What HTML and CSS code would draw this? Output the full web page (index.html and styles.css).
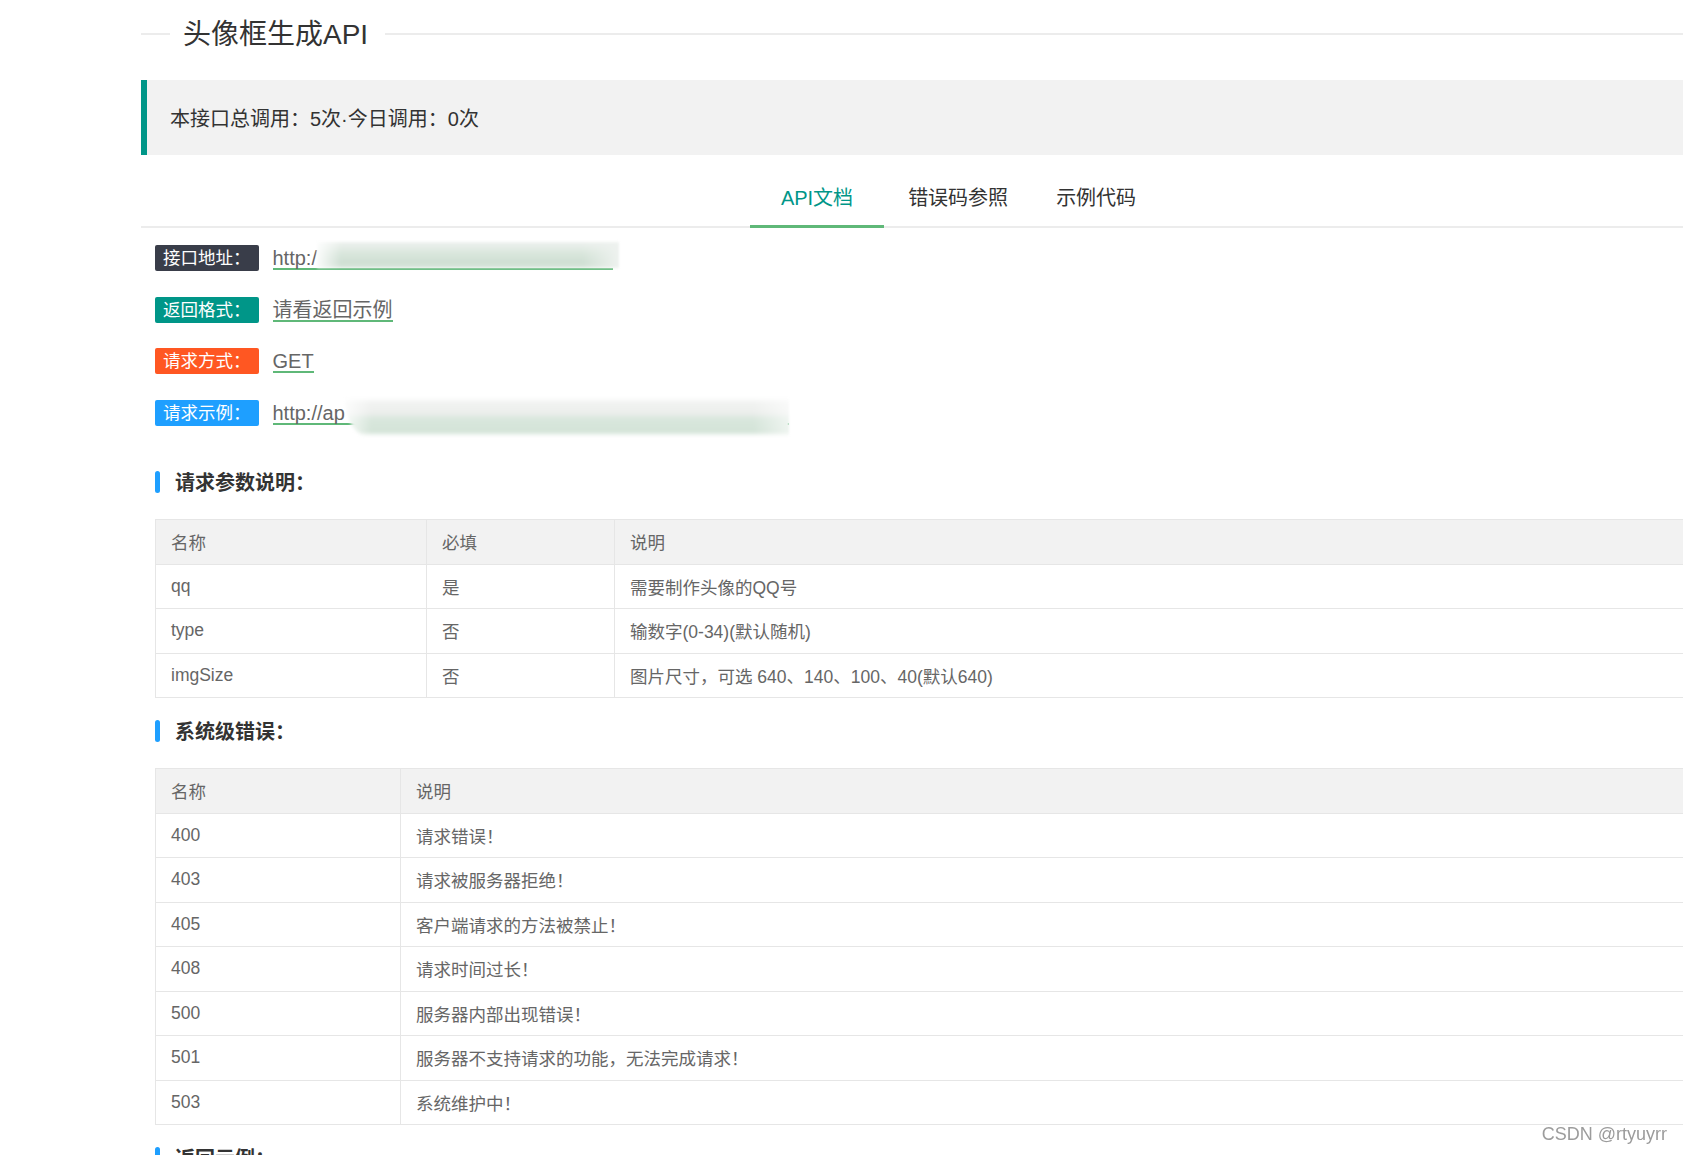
FILE: index.html
```html
<!DOCTYPE html>
<html lang="zh-CN">
<head>
<meta charset="utf-8">
<title>头像框生成API</title>
<link rel="stylesheet" href="styles.css">
</head>
<body>
<div class="page">
  <div class="legend"><span class="legend-text">头像框生成API</span></div>

  <div class="quote">本接口总调用：5次·今日调用：0次</div>

  <ul class="tabs">
    <li class="tab active">API文档</li>
    <li class="tab">错误码参照</li>
    <li class="tab">示例代码</li>
  </ul>

  <div class="body">
    <div class="info">
      <div class="info-row">
        <span class="badge badge-dark">接口地址：</span>
        <span class="value">http:/<span class="mask mask-a"></span></span>
      </div>
      <div class="info-row">
        <span class="badge badge-teal">返回格式：</span>
        <span class="value">请看返回示例</span>
      </div>
      <div class="info-row">
        <span class="badge badge-orange">请求方式：</span>
        <span class="value">GET</span>
      </div>
      <div class="info-row">
        <span class="badge badge-blue">请求示例：</span>
        <span class="value">http://ap<span class="mask mask-b"></span></span>
      </div>
    </div>

    <h3 class="sec-title sec-first">请求参数说明：</h3>
    <table class="tbl tbl-params">
      <colgroup><col class="c1"><col class="c2"><col></colgroup>
      <thead><tr><th>名称</th><th>必填</th><th>说明</th></tr></thead>
      <tbody>
        <tr><td>qq</td><td>是</td><td>需要制作头像的QQ号</td></tr>
        <tr><td>type</td><td>否</td><td>输数字(0-34)(默认随机)</td></tr>
        <tr><td>imgSize</td><td>否</td><td>图片尺寸，可选 640、140、100、40(默认640)</td></tr>
      </tbody>
    </table>

    <h3 class="sec-title sec-second">系统级错误：</h3>
    <table class="tbl tbl-errors">
      <colgroup><col class="c1"><col></colgroup>
      <thead><tr><th>名称</th><th>说明</th></tr></thead>
      <tbody>
        <tr><td>400</td><td>请求错误！</td></tr>
        <tr><td>403</td><td>请求被服务器拒绝！</td></tr>
        <tr><td>405</td><td>客户端请求的方法被禁止！</td></tr>
        <tr><td>408</td><td>请求时间过长！</td></tr>
        <tr><td>500</td><td>服务器内部出现错误！</td></tr>
        <tr><td>501</td><td>服务器不支持请求的功能，无法完成请求！</td></tr>
        <tr><td>503</td><td>系统维护中！</td></tr>
      </tbody>
    </table>

    <h3 class="sec-title">返回示例：</h3>
  </div>
</div>
<div class="watermark">CSDN @rtyuyrr</div>
</body>
</html>
```

FILE: styles.css
```css
html, body {
  margin: 0;
  padding: 0;
  background: #fff;
  overflow: hidden;
}

body {
  font-family: "Liberation Sans", "Noto Sans CJK SC", sans-serif;
  color: #333;
  width: 1683px;
  height: 1155px;
}

.page {
  margin-left: 141px;
  width: 1628px;
}

/* fieldset-like title */
.legend {
  display: flex;
  align-items: center;
  height: 68px;
}
.legend::before,
.legend::after {
  content: "";
  height: 2px;
  background: #ececec;
}
.legend::before {
  width: 29px;
}
.legend::after {
  flex: 1;
}
.legend-text {
  font-size: 28px;
  line-height: 34px;
  padding-top: 2px;
  color: #333;
  margin: 0 17px 0 13px;
}

/* blockquote */
.quote {
  margin-top: 12px;
  height: 75px;
  line-height: 72px;
  padding-top: 3px;
  box-sizing: border-box;
  border-left: 6px solid #009688;
  background: #f2f2f2;
  padding-left: 23px;
  font-size: 20px;
  color: #333;
}

/* tabs */
.tabs {
  list-style: none;
  margin: 13px 0 0;
  padding: 0;
  display: flex;
  justify-content: center;
  border-bottom: 2px solid #ececec;
}
.tab {
  font-size: 20px;
  line-height: 54px;
  padding: 3px 24px 0;
  border-bottom: 3px solid transparent;
  margin-bottom: -2px;
  color: #333;
  white-space: nowrap;
}
.tab.active {
  padding: 3px 31px 0;
  color: #009688;
  border-bottom-color: #5fb878;
}

.body {
  padding-left: 14px;
}

/* info rows */
.info {
  margin-top: 17px;
  display: flex;
  flex-direction: column;
  gap: 25.5px;
}
.info-row {
  display: flex;
  align-items: center;
  height: 26px;
}
.badge {
  display: inline-block;
  height: 26px;
  line-height: 26px;
  padding: 0 8px;
  font-size: 17.5px;
  color: #fff;
  border-radius: 2px;
  white-space: nowrap;
}
.badge-dark { background: #393d49; }
.badge-teal { background: #009688; }
.badge-orange { background: #ff5722; }
.badge-blue { background: #1e9fff; }

.value {
  margin-left: 14px;
  font-size: 20px;
  line-height: 20px;
  color: #666;
  border-bottom: 2px solid #5fb878;
  white-space: nowrap;
  margin-top: 2px;
}

.mask {
  display: inline-block;
  vertical-align: top;
  height: 20px;
  filter: blur(1.2px);
}
.mask-a {
  width: 302px;
  margin-right: -6px;
  transform: translateY(-3px) scaleY(1.3);
  background:
    linear-gradient(90deg, rgba(255,255,255,0.9) 0%, rgba(255,255,255,0) 8%, rgba(255,255,255,0) 88%, rgba(238,242,239,1) 100%),
    linear-gradient(180deg, #eef2ef 0%, #d9e6dc 45%, #cfdfd3 80%, #dbe7de 100%);
}
.mask-b {
  width: 444px;
  transform: translateY(4px) scaleY(1.7);
  background:
    linear-gradient(90deg, rgba(255,255,255,0.8) 0%, rgba(255,255,255,0) 6%, rgba(255,255,255,0) 92%, rgba(255,255,255,0.6) 100%),
    linear-gradient(180deg, #f3f4f3 0%, #eceeec 40%, #d9e7dd 55%, #d3e3d7 100%);
  border-radius: 0 0 0 30px;
}

/* section titles */
.sec-title {
  display: flex;
  align-items: center;
  height: 22px;
  margin: 21.5px 0 0;
  font-size: 20px;
  font-weight: bold;
  color: #333;
}
.sec-title::before {
  content: "";
  width: 5px;
  height: 22px;
  border-radius: 3px;
  background: #1e9fff;
  margin-right: 15px;
}
.sec-first {
  margin-top: 45px;
}
.sec-second {
  margin-top: 21.5px;
}

/* tables */
.tbl {
  margin-top: 26px;
  width: 100%;
  border-collapse: collapse;
  table-layout: fixed;
  border: 1px solid #e6e6e6;
  font-size: 17.5px;
  color: #666;
}
.tbl th,
.tbl td {
  border: 1px solid #e6e6e6;
  padding: 0 15px;
  height: 43.5px;
  text-align: left;
  font-weight: normal;
  white-space: nowrap;
}
.tbl th {
  background: #f2f2f2;
  height: 44px;
}
.tbl-params .c1 { width: 271px; }
.tbl-params .c2 { width: 188px; }
.tbl-errors .c1 { width: 245px; }

/* watermark */
.watermark {
  position: fixed;
  right: 16px;
  bottom: 10px;
  font-family: "Liberation Sans", sans-serif;
  font-size: 18px;
  line-height: 22px;
  color: #9c9c9c;
}
```
